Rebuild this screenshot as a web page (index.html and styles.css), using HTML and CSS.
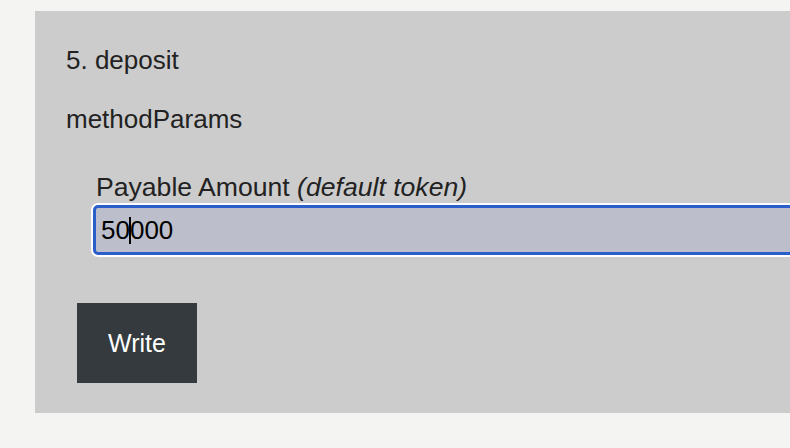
FILE: index.html
```html
<!DOCTYPE html>
<html>
<head>
<meta charset="utf-8">
<link rel="stylesheet" href="styles.css">
</head>
<body>
<div class="page">
  <section class="panel">
    <div class="title">5. deposit</div>
    <div class="params-label">methodParams</div>
    <div class="field">
      <label class="field-label">Payable Amount <em>(default token)</em></label>
      <div class="input"><span>50</span><span class="caret"></span><span>000</span></div>
    </div>
    <div class="actions">
      <button class="btn">Write</button>
    </div>
  </section>
</div>
</body>
</html>
```

FILE: styles.css
```css
html, body {
  margin: 0;
  padding: 0;
  background: #f4f4f2;
  font-family: "Liberation Sans", Arial, sans-serif;
  color: #222;
}
.page {
  padding: 11px 0 0 35px;
  height: 448px;
  box-sizing: border-box;
  overflow: hidden;
}
.panel {
  background: #cccccc;
  height: 402px;
  box-sizing: border-box;
  padding: 34px 0 0 31px;
  margin-right: -40px;
  display: flex;
  flex-direction: column;
  font-size: 26px;
}
.title {
  line-height: 30px;
}
.params-label {
  margin-top: 29px;
  line-height: 30px;
}
.field {
  margin-top: 39px;
  margin-left: 27px;
  display: flex;
  flex-direction: column;
}
.field-label {
  font-size: 26.6px;
  line-height: 28px;
  padding-left: 3px;
}
.input {
  margin-top: 4px;
  height: 50px;
  box-sizing: border-box;
  background: #bcbecb;
  border: 3px solid #2c5ecb;
  border-radius: 5px;
  box-shadow: 0 0 0 2px #ffffff;
  display: flex;
  align-items: center;
  padding-left: 5px;
  font-size: 26px;
  color: #000;
}
.caret {
  display: inline-block;
  width: 2px;
  height: 27px;
  background: #000;
  margin: 0 -1px;
}
.actions {
  margin-top: 48px;
  margin-left: 11px;
}
.btn {
  width: 120px;
  height: 80px;
  background: #343a3e;
  color: #fff;
  border: none;
  border-radius: 0;
  font-family: "Liberation Sans", Arial, sans-serif;
  font-size: 25px;
  padding: 0;
}
```
